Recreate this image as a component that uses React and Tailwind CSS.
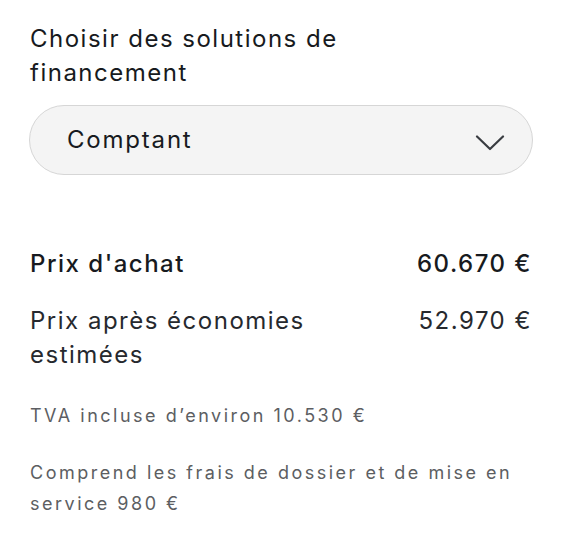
export default function App() {
  return (
    <div className="min-h-screen bg-white font-[Inter,'Liberation_Sans',sans-serif] text-[#171a20]">
      <div className="flex w-[506px] flex-col pl-[29px] pt-[22px]">
        {/* Header */}
        <h2 className="w-[330px] pl-px text-[24px] leading-[34px] tracking-[1.5px]">
          Choisir des solutions de financement
        </h2>

        {/* Select */}
        <button
          type="button"
          className="mt-[15px] flex h-[70px] w-[504px] items-center justify-between rounded-full border border-[#d6d6d6] bg-[#f4f4f4] pl-[37px] pr-[27px]"
        >
          <span className="text-[24px] tracking-[1.8px] text-[#171a20]">
            Comptant
          </span>
          <svg width="30" height="16" viewBox="0 0 30 16" fill="none" className="mt-[5px]">
            <path
              d="M2 1.5 L15 14 L28 1.5"
              stroke="#393c41"
              strokeWidth="2.2"
              strokeLinecap="round"
              strokeLinejoin="round"
            />
          </svg>
        </button>

        {/* Prices */}
        <div className="mt-[72px] flex w-[504px] flex-col gap-[23px] pl-px pr-[1px] text-[24px] leading-[34px] tracking-[1.5px]">
          <div className="flex items-start justify-between font-medium">
            <span>Prix d'achat</span>
            <span>60.670 €</span>
          </div>
          <div className="flex items-start justify-between text-[#26292e]">
            <span className="w-[290px]">Prix après économies estimées</span>
            <span>52.970 €</span>
          </div>
        </div>

        {/* Notes */}
        <div className="mt-[28px] flex w-[504px] flex-col gap-[26px] pl-px text-[18px] leading-[31px] tracking-[2.5px] text-[#5c5e62]">
          <p>TVA incluse d’environ 10.530 €</p>
          <p>Comprend les frais de dossier et de mise en service 980 €</p>
        </div>
      </div>
    </div>
  );
}
